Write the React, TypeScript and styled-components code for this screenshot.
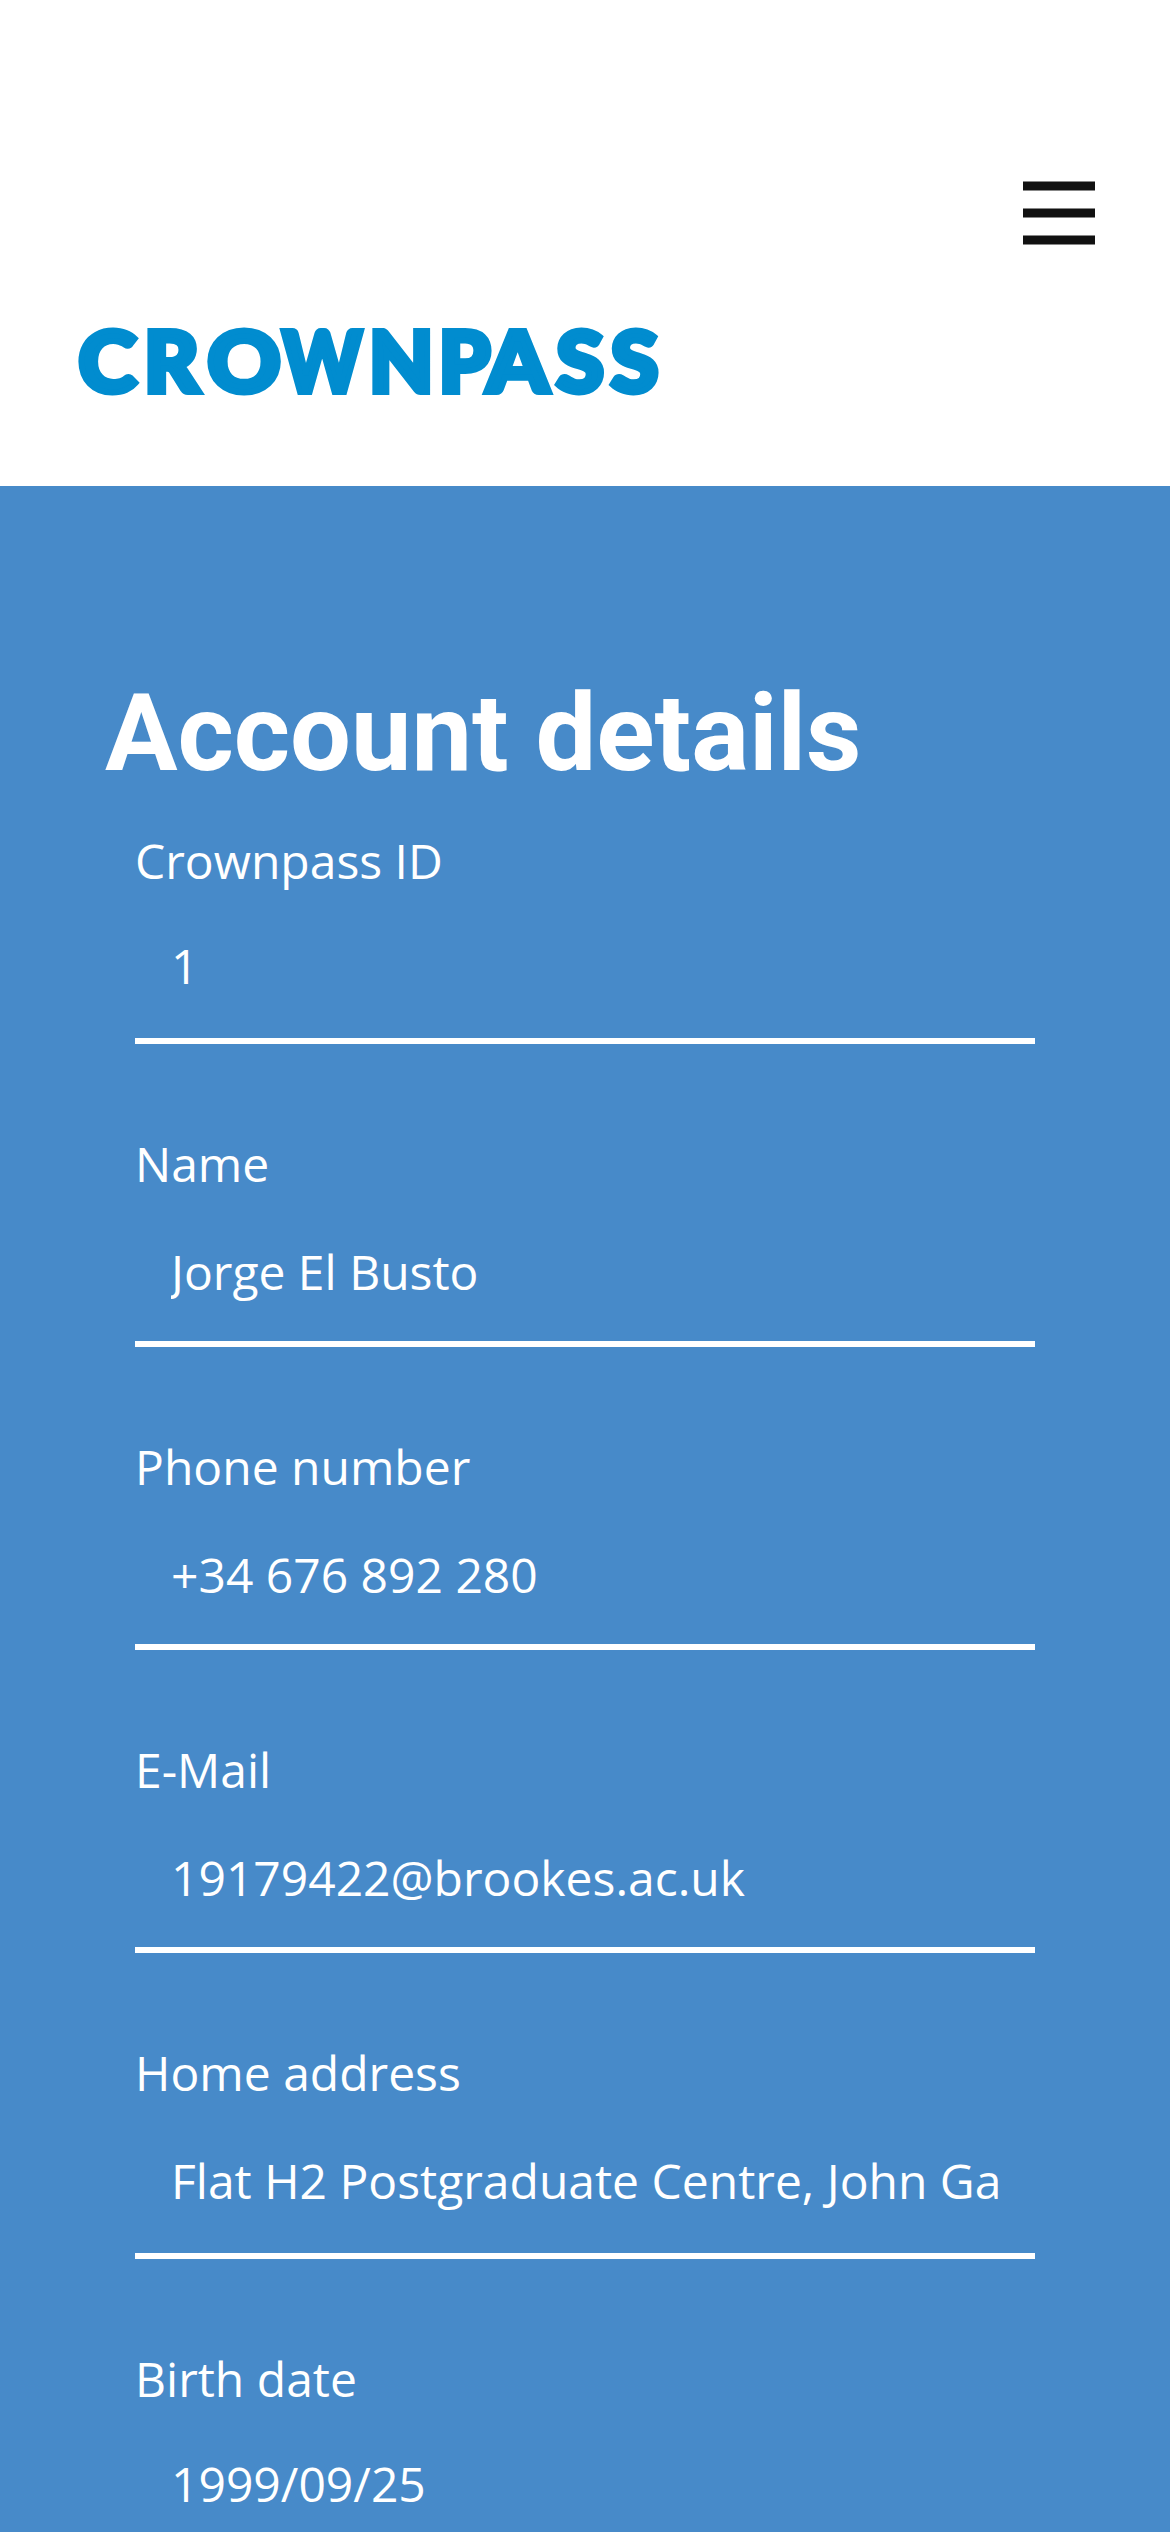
import React from "react";
import styled, { createGlobalStyle } from "styled-components";

const Global = createGlobalStyle`
  * { box-sizing: border-box; }
  body { margin: 0; background: #478ac9; overflow: hidden; font-family: "Open Sans", sans-serif; }
`;
const Page = styled.div`width: 1170px; height: 2532px; overflow: hidden; background: #478ac9; color: #fff;`;
const Header = styled.header`
  height: 486px; background: #fff; padding: 181px 75px 0 77px;
  display: flex; flex-direction: column;
`;
const Menu = styled.button`align-self: flex-end; width: 72px; height: 64px; padding: 0; border: 0; background: none;`;
const MenuIcon = styled.svg`display: block; width: 72px; height: 64px; fill: #111;`;
const Logo = styled.svg`width: 590px; height: 80px; margin-top: 76px; overflow: visible;`;
const LogoText = styled.text`
  font: 900 84.7px Lato, sans-serif; fill: #018ccf; stroke: #018ccf; stroke-width: 6px;
`;
const Main = styled.main`padding: 188px 135px 0;`;
const Title = styled.h1`margin: 0 0 29px -30px; font: 700 108px/119px Roboto, sans-serif; white-space: nowrap;`;
const Field = styled.label`display: flex; flex-direction: column; margin-bottom: 81px;`;
const Caption = styled.span`font-size: 48px; line-height: 77px;`;
const Input = styled.input<{ $height: number; $lift: number }>`
  height: ${p => p.$height}px; padding: 0 36px ${p => p.$lift}px;
  border: 0; border-bottom: 6px solid #fff; border-radius: 0; outline: 0;
  background: transparent; color: #fff; font: 400 48px "Open Sans", sans-serif;
`;

// Letter, left edge and advance width, for the tight custom spacing of the wordmark.
const letters: [string, number, number][] = [
  ["C", 1.5, 57.8], ["R", 67.1, 55], ["O", 130.5, 73.2], ["W", 205.6, 79.2], ["N", 292.1, 64.5],
  ["P", 361.7, 51.5], ["A", 410, 61.3], ["S", 479.2, 47.6], ["S", 533.7, 47.6],
];
const fields = [
  { label: "Crownpass ID", value: "1", height: 145, lift: 6 },
  { label: "Name", value: "Jorge El Busto", height: 145, lift: 0 },
  { label: "Phone number", value: "+34 676 892 280", height: 145, lift: 0 },
  { label: "E-Mail", value: "19179422@brookes.ac.uk", height: 145, lift: 0 },
  { label: "Home address", value: "Flat H2 Postgraduate Centre, John Garratt", height: 148, lift: 3 },
  { label: "Birth date", value: "1999/09/25", height: 145, lift: 6 },
];

export default function App() {
  return (
    <Page>
      <Global />
      <Header>
        <Menu aria-label="Menu">
          <MenuIcon viewBox="0 0 72 64">
            <rect y=".5" width="72" height="9" />
            <rect y="27.5" width="72" height="9" />
            <rect y="54.5" width="72" height="9" />
          </MenuIcon>
        </Menu>
        <Logo viewBox="0 0 590 80">
          <LogoText y="71">
            {letters.map(([ch, x, w], i) => (
              <tspan key={i} x={x} textLength={w} lengthAdjust="spacingAndGlyphs">{ch}</tspan>
            ))}
          </LogoText>
        </Logo>
      </Header>
      <Main>
        <Title>Account details</Title>
        {fields.map(f => (
          <Field key={f.label}>
            <Caption>{f.label}</Caption>
            <Input defaultValue={f.value} $height={f.height} $lift={f.lift} />
          </Field>
        ))}
      </Main>
    </Page>
  );
}
